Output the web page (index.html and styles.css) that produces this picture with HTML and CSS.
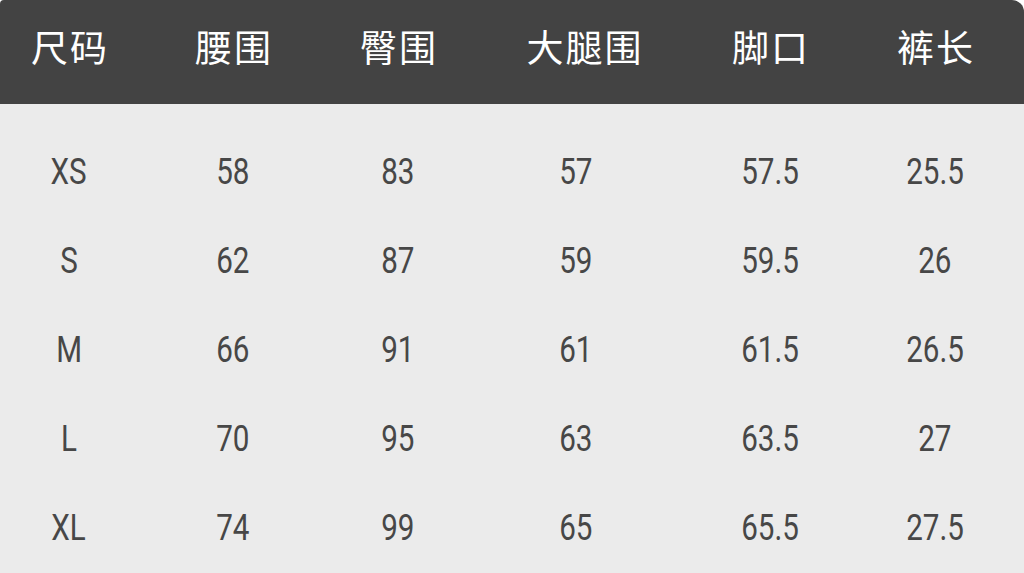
FILE: index.html
```html
<!DOCTYPE html>
<html lang="zh">
<head>
<meta charset="utf-8">
<link rel="stylesheet" href="styles.css">
</head>
<body>
<div class="chart">
  <div class="row head">
    <div class="cell">尺码</div>
    <div class="cell">腰围</div>
    <div class="cell">臀围</div>
    <div class="cell c4">大腿围</div>
    <div class="cell">脚口</div>
    <div class="cell">裤长</div>
  </div>
  <div class="body">
    <div class="row"><div class="cell"><span>XS</span></div><div class="cell"><span>58</span></div><div class="cell"><span>83</span></div><div class="cell"><span>57</span></div><div class="cell"><span>57.5</span></div><div class="cell"><span>25.5</span></div></div>
    <div class="row"><div class="cell"><span>S</span></div><div class="cell"><span>62</span></div><div class="cell"><span>87</span></div><div class="cell"><span>59</span></div><div class="cell"><span>59.5</span></div><div class="cell"><span>26</span></div></div>
    <div class="row"><div class="cell"><span>M</span></div><div class="cell"><span>66</span></div><div class="cell"><span>91</span></div><div class="cell"><span>61</span></div><div class="cell"><span>61.5</span></div><div class="cell"><span>26.5</span></div></div>
    <div class="row"><div class="cell"><span>L</span></div><div class="cell"><span>70</span></div><div class="cell"><span>95</span></div><div class="cell"><span>63</span></div><div class="cell"><span>63.5</span></div><div class="cell"><span>27</span></div></div>
    <div class="row"><div class="cell"><span>XL</span></div><div class="cell"><span>74</span></div><div class="cell"><span>99</span></div><div class="cell"><span>65</span></div><div class="cell"><span>65.5</span></div><div class="cell"><span>27.5</span></div></div>
  </div>
</div>
</body>
</html>
```
FILE: styles.css
```css
html, body {
  margin: 0;
  padding: 0;
  background: #ffffff;
}
body {
  width: 1024px;
  height: 573px;
  overflow: hidden;
}
.chart {
  width: 1024px;
  height: 573px;
  background: #ebebeb;
  border-top-left-radius: 4px;
  border-top-right-radius: 12px;
  overflow: hidden;
}
.row {
  display: grid;
  grid-template-columns: 138px 190px 140px 216px 172px 158px;
  align-items: center;
}
.head {
  height: 104px;
  background: #434343;
  color: #ffffff;
  font-family: "Noto Sans CJK SC", "Noto Sans", sans-serif;
  font-size: 37px;
  letter-spacing: 2px;
}
.head .cell {
  padding-bottom: 12px;
  padding-left: 2px;
}
.head .c4 {
  padding-left: 18px;
}
.cell {
  text-align: center;
}
.body {
  padding-top: 24px;
}
.body .row {
  height: 89px;
  color: #474747;
  font-family: Roboto, "Liberation Sans", sans-serif;
  font-size: 37px;
}
.body .cell {
  padding-bottom: 2px;
}
.body .cell span {
  display: inline-block;
  transform: scaleX(0.8);
}
```
